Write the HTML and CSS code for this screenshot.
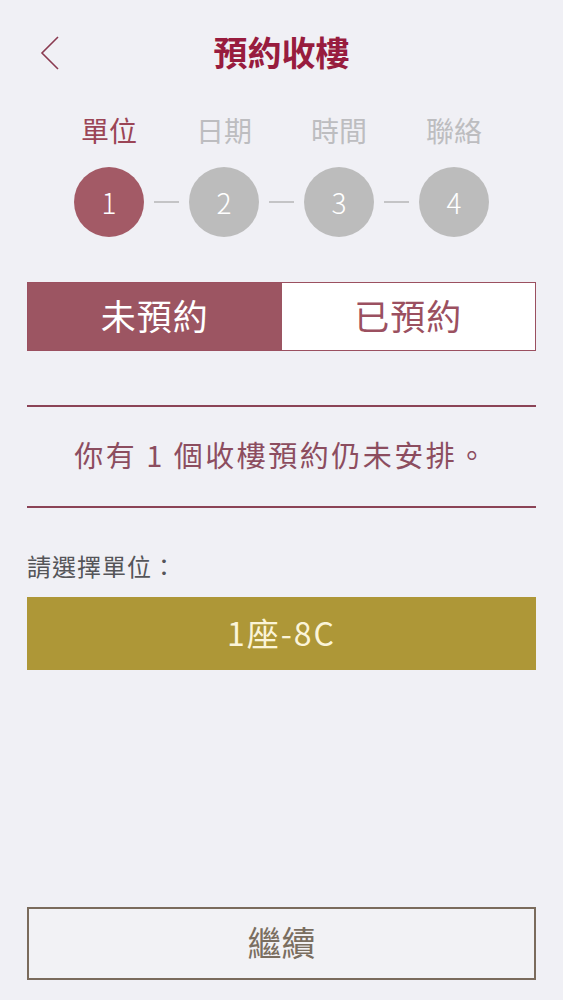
FILE: index.html
```html
<!DOCTYPE html>
<html lang="zh-Hant">
<head>
<meta charset="utf-8">
<title>預約收樓</title>
<link rel="stylesheet" href="styles.css">
</head>
<body>
<div class="page">
  <header class="header">
    <button class="back" aria-label="返回">
      <svg width="20" height="34" viewBox="0 0 20 34"><path d="M18 1 L2 17 L18 33" fill="none" stroke="#8a3a50" stroke-width="1.6"/></svg>
    </button>
    <h1 class="title">預約收樓</h1>
  </header>

  <div class="step-labels">
    <span class="step-label active">單位</span>
    <span class="step-label">日期</span>
    <span class="step-label">時間</span>
    <span class="step-label">聯絡</span>
  </div>

  <div class="steps">
    <span class="dot active">1</span>
    <span class="conn"></span>
    <span class="dot">2</span>
    <span class="conn"></span>
    <span class="dot">3</span>
    <span class="conn"></span>
    <span class="dot">4</span>
  </div>

  <div class="tabs">
    <button class="tab selected">未預約</button>
    <button class="tab">已預約</button>
  </div>

  <div class="notice">你有 1 個收樓預約仍未安排。</div>

  <div class="select-label">請選擇單位：</div>
  <button class="unit">1座-8C</button>

  <button class="continue">繼續</button>
</div>
</body>
</html>
```

FILE: styles.css
```css
html, body {
  margin: 0;
  padding: 0;
  background: #f0f0f5;
}
body {
  font-family: "Noto Sans CJK TC", "Noto Sans", sans-serif;
}
.page {
  min-height: 1000px;
  box-sizing: border-box;
  padding: 0 27px 20px;
  display: flex;
  flex-direction: column;
}
.header {
  position: relative;
  height: 104px;
  display: flex;
  align-items: center;
  justify-content: center;
}
.back {
  position: absolute;
  left: 13px;
  top: 36px;
  padding: 0;
  border: 0;
  background: none;
  line-height: 0;
}
.title {
  margin: 0;
  font-size: 34px;
  font-weight: 700;
  color: #981c3e;
  line-height: 40px;
}
.step-labels {
  margin: 11px auto 0;
  width: 460px;
  display: grid;
  grid-template-columns: repeat(4, 1fr);
  text-align: center;
}
.step-label {
  font-size: 28px;
  line-height: 30px;
  color: #bdbdc0;
}
.step-label.active {
  color: #9b4556;
}
.steps {
  margin-top: 22px;
  display: flex;
  justify-content: center;
  align-items: center;
}
.dot {
  width: 70px;
  height: 70px;
  border-radius: 50%;
  background: #bcbcbc;
  color: #fff;
  font-size: 28px;
  font-weight: 200;
  display: flex;
  align-items: center;
  justify-content: center;
}
.dot.active {
  background: #a35a66;
}
.conn {
  width: 45px;
  display: flex;
  justify-content: center;
}
.conn::before {
  content: "";
  width: 25px;
  height: 2px;
  background: #c4c4c6;
}
.tabs {
  margin-top: 45px;
  height: 69px;
  display: flex;
  border: 1.5px solid #9b5060;
  box-sizing: border-box;
}
.tab {
  flex: 1;
  border: 0;
  margin: 0;
  padding: 0 0 4px;
  font-family: inherit;
  font-size: 35px;
  letter-spacing: 1px;
  background: #fff;
  color: #9b5060;
}
.tab.selected {
  background: #9c5562;
  color: #fff;
}
.notice {
  margin-top: 54px;
  height: 103px;
  box-sizing: border-box;
  padding-bottom: 6px;
  border-top: 2px solid #8b4356;
  border-bottom: 2px solid #8b4356;
  display: flex;
  align-items: center;
  justify-content: center;
  font-size: 29px;
  letter-spacing: 2.5px;
  color: #8c4d5f;
}
.select-label {
  margin-top: 44px;
  font-size: 24px;
  letter-spacing: 1px;
  line-height: 28px;
  color: #555559;
}
.unit {
  margin-top: 17px;
  height: 73px;
  border: 0;
  padding: 0 0 4px;
  background: #ae9737;
  color: #fbf4d8;
  font-family: inherit;
  font-size: 32px;
  letter-spacing: 2px;
}
.continue {
  margin-top: auto;
  height: 73px;
  border: 2px solid #7a6b5c;
  background: #f2f2f5;
  color: #7a6e60;
  font-family: inherit;
  font-size: 34px;
  padding: 0 0 4px;
}
```
